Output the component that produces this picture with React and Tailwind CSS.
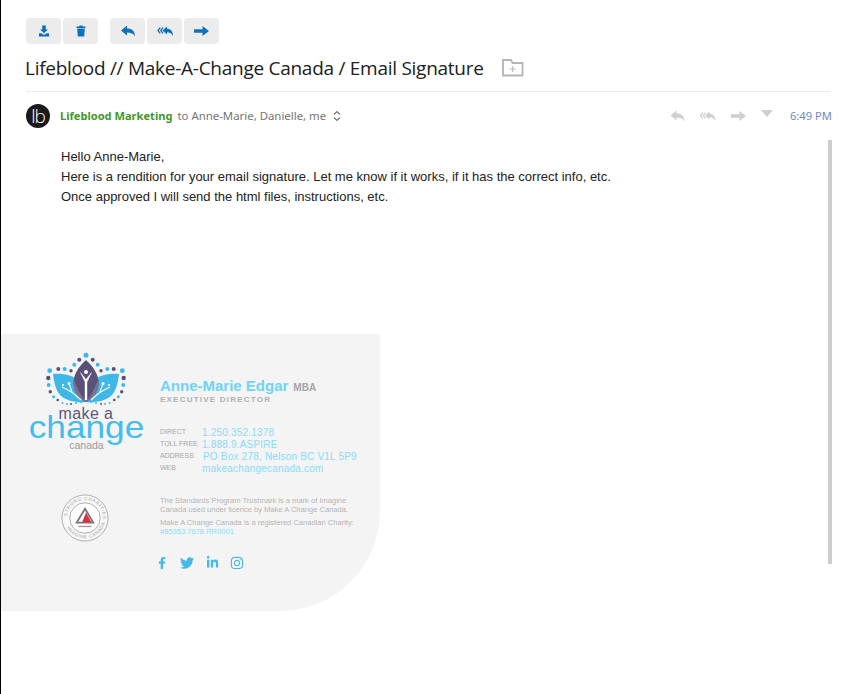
import React from "react";
import { FaTwitter, FaFacebookF, FaLinkedinIn, FaInstagram } from "react-icons/fa";

const Reply = ({ c, w = 14 }) => (
  <svg width={w} height="12" viewBox="0 0 14 12" fill={c}><path d="M0 5.5 L6 0.5 V3.5 C11 3.5 14 6 14 11.5 C12.5 8.5 10 7.5 6 7.5 V10.5 Z" /></svg>
);
const ReplyAll = ({ c, w = 16 }) => (
  <svg width={w} height="12" viewBox="0 0 16 12" fill={c}>
    <path d="M3.2 2.6 L1 5.5 L3.2 8.4 M6 2.6 L3.8 5.5 L6 8.4" fill="none" stroke={c} strokeWidth="1.3" />
    <path d="M5.5 5.5 L10 1.5 V3.8 C13.5 3.8 16 6 16 11 C14.5 8.5 13 7.3 10 7.3 V9.5 Z" />
  </svg>
);
const Forward = ({ c }) => (
  <svg width="15" height="12" viewBox="0 0 15 12" fill={c}><path d="M0 4.2 H8.5 V1 L15 6 L8.5 11 V7.8 H0 Z" /></svg>
);
const Btn = ({ children }) => (
  <div className="w-[35px] h-[26px] rounded-[4px] bg-[#ececec] flex items-center justify-center">{children}</div>
);

const B = "#3fb8e8";
const D = "#5a5078";
const Logo = () => {
  const pairs = [
    [34.3, 7.7, 2, D], [29.3, 12.7, 2, B], [26, 18.7, 1.7, D], [19.7, 17, 2, B], [13.3, 17, 2, D], [4.7, 18.7, 2.4, B],
    [3.3, 26, 2.2, D], [3.7, 33, 2, B], [5.3, 39.7, 1.7, D], [8.7, 44.7, 1.5, B], [12.7, 48, 1.3, D],
    [17.5, 51, 1, B], [22, 52, 1, B], [26, 52, 1, D], [31, 51, 1, B], [36, 50, 1, B],
  ];
  const dots = [[41, 3.3, 2.5, B], ...pairs, ...pairs.map(([x, y, r, f]) => [82 - x, y, r, f])];
  return (
    <svg width="82" height="54" viewBox="0 0 82 54" className="block">
      {dots.map(([x, y, r, f], i) => <circle key={i} cx={x} cy={y} r={r} fill={f} />)}
      <path d="M8 22 C16 21 28 22 34 30 C38 36 40 44 41 50 C32 51 22 49 16 44 C11 39 9 31 8 22 Z" fill={B} />
      <path d="M74 22 C66 21 54 22 48 30 C44 36 42 44 41 50 C50 51 60 49 66 44 C71 39 73 31 74 22 Z" fill={B} />
      <path d="M41 8 C33 15 28.5 23 28.5 31 C28.5 41 35 47 41 50 C47 47 53.5 41 53.5 31 C53.5 23 49 15 41 8 Z" fill="#5b5178" />
      <path d="M28.8 28 C31 32 34 42 41 50 C35 48 28.5 41 28.5 33 Z M53.2 28 C51 32 48 42 41 50 C47 48 53.5 41 53.5 33 Z" fill="#7b7296" />
      <path d="M35.5 20.5 L40 30 V48 H42 V30 L46.5 20.5 L41 27.5 Z" fill="#fff" stroke="#fff" strokeWidth="0.4" />
      <circle cx="41" cy="20" r="2" fill="#fff" />
      <path d="M36 48 C30 42 24 38 17 35 M27 40 L24.5 33 M46 48 C52 42 58 38 65 35 M55 40 L57.5 33" stroke="#fff" strokeWidth="1.1" fill="none" />
      <circle cx="24" cy="31.5" r="1.5" fill="#fff" /><circle cx="18" cy="33" r="1.1" fill="#fff" />
      <circle cx="58" cy="31.5" r="1.5" fill="#fff" /><circle cx="64" cy="33" r="1.1" fill="#fff" />
    </svg>
  );
};

const Seal = () => (
  <svg width="48" height="48" viewBox="0 0 52 52" className="block">
    <circle cx="26" cy="26" r="25" fill="#f8f8f8" stroke="#a8a8a8" strokeWidth="1" />
    <circle cx="26" cy="26" r="16.5" fill="#fff" stroke="#a8a8a8" strokeWidth="1" />
    <defs>
      <path id="topArc" d="M6.5 26 A19.5 19.5 0 0 1 45.5 26" />
      <path id="botArc" d="M4 26 A22 22 0 0 0 48 26" />
    </defs>
    <text fontSize="5" fill="#a0a0a0" fontFamily="'Liberation Sans',sans-serif" letterSpacing="0.7"><textPath href="#topArc" startOffset="3%">STRONG CHARITIES</textPath></text>
    <text fontSize="5" fill="#a0a0a0" fontFamily="'Liberation Sans',sans-serif" letterSpacing="0.7"><textPath href="#botArc" startOffset="16%">IMAGINE CANADA</textPath></text>
    <path d="M26 16 L35 31 H17 Z" fill="none" stroke="#777" strokeWidth="2" />
    <path d="M27 20 L33 30.5 H23 Z" fill="#d9303f" />
    <rect x="19" y="34.5" width="14" height="1.2" fill="#e0707f" />
  </svg>
);

const Row = ({ label, labelW, value }) => (
  <div className="flex items-center h-[12.2px]">
    <span className="text-[7px] text-[#a6a6a6] shrink-0" style={{ width: labelW }}>{label}</span>
    <span className="text-[10px] tracking-[0.2px] text-[#86dcfa] whitespace-nowrap">{value}</span>
  </div>
);

export default function App() {
  return (
    <div className="w-[851px] h-[694px] bg-white border-l border-l-black overflow-hidden font-['Liberation_Sans',Arial,sans-serif] text-[#222]">
      <div className="pl-[25px] pr-[19px]">
        <div className="pt-[18px] flex">
          <div className="flex gap-[2px]">
            <Btn>
              <svg width="12" height="12" viewBox="0 0 12 12" fill="#0b72c0"><path d="M4.2 0.5 H7.8 V4.5 H10 L6 8.3 L2 4.5 H4.2 Z" /><path d="M1 8.3 H3.2 L6 10 L8.8 8.3 H11 V11.5 H1 Z" /></svg>
            </Btn>
            <Btn>
              <svg width="10" height="12" viewBox="0 0 10 12" fill="#0b72c0"><path d="M3.5 0.5 H6.5 L7 1.5 H9.5 V3 H0.5 V1.5 H3 Z" /><path d="M1.2 3.6 H8.8 L8.2 11.5 H1.8 Z" /></svg>
            </Btn>
          </div>
          <div className="flex gap-[2px] ml-[12px]">
            <Btn><Reply c="#0b72c0" /></Btn>
            <Btn><ReplyAll c="#0b72c0" /></Btn>
            <Btn><Forward c="#0b72c0" /></Btn>
          </div>
        </div>
        <div className="flex items-center h-[32px] mt-[8px]">
          <h1 className="-ml-[1px] text-[19px] leading-[28px] text-[#202020] tracking-[-0.27px] font-['Open_Sans',sans-serif] whitespace-nowrap">Lifeblood // Make-A-Change Canada / Email Signature</h1>
          <svg width="22" height="18" viewBox="0 0 22 18" fill="none" stroke="#b5b5b5" strokeWidth="1.8" className="ml-[18px] -mt-[1px]">
            <path d="M1 16.5 V1 H9 L10.5 4 H20.5 V16.5 Z" />
            <path d="M10.7 7 V13 M7.7 10 H13.7" strokeWidth="1" />
          </svg>
        </div>
        <div className="h-px bg-[#ececec] mt-[7px] w-[805px]" />
        <div className="flex items-center h-[48px] w-[806px]">
          <div className="w-[24px] h-[24px] rounded-full bg-[#1a1a1a] flex items-center justify-center text-white text-[19px] tracking-[-1px] leading-none font-['Open_Sans',sans-serif] font-light">lb</div>
          <span className="ml-[10px] text-[11.1px] font-bold text-[#3f9a26] whitespace-nowrap font-['Noto_Sans',sans-serif]">Lifeblood Marketing</span>
          <span className="ml-[5px] text-[11.4px] text-[#757575] whitespace-nowrap font-['Noto_Sans',sans-serif]">to Anne-Marie, Danielle, me</span>
          <svg width="8" height="12" viewBox="0 0 8 12" fill="none" stroke="#777" strokeWidth="1.2" className="ml-[7px]"><path d="M1 4.5 L4 1.5 L7 4.5 M1 7.5 L4 10.5 L7 7.5" /></svg>
          <div className="ml-auto flex items-center">
            <Reply c="#cfcfcf" w={15} />
            <span className="w-[14px]" />
            <ReplyAll c="#cfcfcf" w={17} />
            <span className="w-[15px]" />
            <Forward c="#cfcfcf" />
            <span className="w-[15px]" />
            <svg width="12" height="7" viewBox="0 0 12 7" fill="#cfcfcf" className="-mt-[5px]"><path d="M0 0 H12 L6 7 Z" /></svg>
            <span className="ml-[17px] text-[11.2px] text-[#6d8bc0] whitespace-nowrap font-['Noto_Sans',sans-serif]">6:49 PM</span>
          </div>
        </div>
      </div>

      <div className="flex">
        <div className="w-[827px] shrink-0">
          <div className="pl-[60px] text-[13px] leading-[20px] text-[#222] pt-[7px]">
            <p>Hello Anne-Marie,</p>
            <p>Here is a rendition for your email signature. Let me know if it works, if it has the correct info, etc.</p>
            <p>Once approved I will send the html files, instructions, etc.</p>
          </div>
          <div className="mt-[127px] w-[379px] h-[277px] bg-[#f4f4f4] rounded-br-[100px] flex">
            <div className="w-[159px] shrink-0 flex flex-col items-center">
              <div className="pl-[11px] pt-[18px] h-[160px] flex flex-col items-center">
                <Logo />
                <div className="text-center">
                  <div className="mt-[1px] text-[16px] leading-[14px] tracking-[0.4px] text-[#5f567d]">make a</div>
                  <div className="-mt-[6px] text-[32px] leading-[24px] text-[#42bdec] scale-x-[1.1] whitespace-nowrap">change</div>
                  <div className="mt-[2px] text-[10.5px] leading-[8px] text-[#999] pl-[1px]">canada</div>
                </div>
              </div>
              <div className="ml-[9px]"><Seal /></div>
            </div>
            <div className="flex-1 pt-[43px]">
              <div className="flex items-baseline whitespace-nowrap h-[17px]">
                <span className="text-[15px] font-bold text-[#6fd3f8] leading-[17px]">Anne-Marie Edgar</span>
                <span className="ml-[5px] text-[10px] font-bold text-[#a6a6a6]">MBA</span>
              </div>
              <div className="text-[8px] font-bold tracking-[1.22px] text-[#b0b0b0] leading-[10px] mt-[1px] whitespace-nowrap">EXECUTIVE DIRECTOR</div>
              <div className="mt-[21px]">
                <Row label="DIRECT" labelW="42px" value="1.250.352.1378" />
                <Row label="TOLL FREE" labelW="42px" value="1.888.9.ASPIRE" />
                <Row label="ADDRESS" labelW="43px" value="PO Box 278, Nelson BC V1L 5P9" />
                <Row label="WEB" labelW="42px" value="makeachangecanada.com" />
              </div>
              <div className="mt-[21px] text-[7.55px] leading-[9px] text-[#b4b4b4] whitespace-nowrap">
                <p>The Standards Program Trustmark is a mark of Imagine</p>
                <p>Canada used under licence by Make A Change Canada.</p>
                <p className="mt-[4px]">Make A Change Canada is a registered Canadian Charity:</p>
                <p className="text-[#86dcfa]">#85353 7678 RR0001</p>
              </div>
              <div className="mt-[20px] flex items-center text-[#45b9e8]">
                <FaFacebookF size={12} className="-ml-[4px]" />
                <FaTwitter size={14} className="ml-[12px]" />
                <FaLinkedinIn size={13} className="ml-[12px]" />
                <FaInstagram size={14} className="ml-[11px]" />
              </div>
            </div>
          </div>
        </div>
        <div className="w-[4px] h-[424px] bg-[#cdcdcd]" />
      </div>
    </div>
  );
}
